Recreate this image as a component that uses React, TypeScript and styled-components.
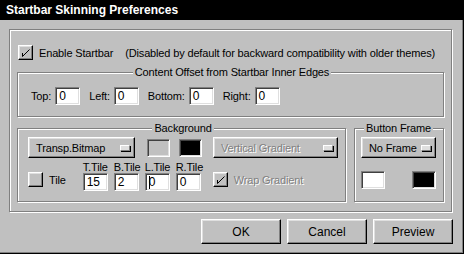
import React from 'react';
import styled, { createGlobalStyle, css } from 'styled-components';

const GlobalStyle = createGlobalStyle`
  html, body {
    margin: 0;
    padding: 0;
    background: #c0c0c0;
  }

  body {
    font-family: 'Liberation Sans', Arial, sans-serif;
    font-size: 11px;
    letter-spacing: -0.15px;
    color: #000;
  }
`;

const raised = css`
  border: 1px solid;
  border-color: #fff #000 #000 #fff;
  box-shadow: inset -1px -1px 0 #808080, inset 1px 1px 0 #dfdfdf;
`;

const sunken = css`
  border: 1px solid;
  border-color: #808080 #fff #fff #808080;
  box-shadow: inset 1px 1px 0 #404040, inset -1px -1px 0 #dfdfdf;
`;

const etched = css`
  border: 1px solid #808080;
  box-shadow: inset 1px 1px 0 #fff, 1px 1px 0 #fff;
`;

const Window = styled.div`
  box-sizing: border-box;
  width: 464px;
  height: 254px;
  display: flex;
  flex-direction: column;
  background: #c0c0c0;
  border-right: 1px solid #000;
  border-bottom: 1px solid #000;
  box-shadow: inset -1px -1px 0 #808080;
`;

const TitleBar = styled.div`
  height: 20px;
  background: #000;
  color: #fff;
  font-size: 12px;
  font-weight: bold;
  letter-spacing: 0;
  line-height: 20px;
  padding-left: 6px;
`;

const Frame = styled.div`
  ${etched};
  box-sizing: border-box;
  width: 443px;
  margin: 9px 0 0 9px;
  padding: 15px 7px 9px;
  display: flex;
  flex-direction: column;
`;

const Row = styled.div<{ $gap?: number; $top?: number; $align?: string }>`
  display: flex;
  align-items: ${(p) => p.$align || 'center'};
  gap: ${(p) => p.$gap || 0}px;
  margin-top: ${(p) => p.$top || 0}px;
`;

const Note = styled.span`
  margin-left: 12px;
`;

const Group = styled.div<{ $width?: number; $top?: number; $pad: string }>`
  ${etched};
  box-sizing: border-box;
  display: flex;
  flex-direction: column;
  ${(p) => (p.$width ? `width: ${p.$width}px;` : '')}
  margin-top: ${(p) => p.$top || 0}px;
  padding: ${(p) => p.$pad};
`;

const Legend = styled.div`
  align-self: center;
  margin-top: -7px;
  padding: 0 2px;
  line-height: 13px;
  background: #c0c0c0;
`;

const Groups = styled.div`
  display: flex;
  gap: 8px;
  margin-top: 11px;
`;

const Label = styled.span`
  line-height: 13px;
`;

const Pair = styled.div`
  display: flex;
  align-items: center;
  gap: 4px;
`;

const Field = styled.div<{ $caret?: boolean; $height?: number }>`
  ${sunken};
  position: relative;
  box-sizing: border-box;
  width: 25px;
  height: ${(p) => p.$height || 18}px;
  background: #fff;
  padding-left: 3px;
  line-height: ${(p) => (p.$height || 18) - 2}px;
  font-size: 12px;

  ${(p) =>
    p.$caret &&
    css`
      &::before {
        content: '';
        position: absolute;
        left: 3px;
        top: 2px;
        width: 1px;
        height: 13px;
        background: #000;
      }
    `}
`;

const Box = styled.span`
  ${raised};
  box-sizing: border-box;
  display: inline-flex;
  width: 15px;
  height: 15px;
  background: #c0c0c0;
`;

const CheckLabel = styled.label<{ $gap: number; $disabled?: boolean }>`
  display: flex;
  align-items: center;
  gap: ${(p) => p.$gap}px;
  color: ${(p) => (p.$disabled ? '#808080' : '#000')};
  text-shadow: ${(p) => (p.$disabled ? '1px 1px 0 #fff' : 'none')};
`;

const Button = styled.div<{ $width: number; $height: number; $disabled?: boolean }>`
  ${raised};
  box-sizing: border-box;
  display: flex;
  align-items: center;
  justify-content: space-between;
  width: ${(p) => p.$width}px;
  height: ${(p) => p.$height}px;
  padding: 0 4px 0 7px;
  background: #c0c0c0;
  color: ${(p) => (p.$disabled ? '#808080' : '#000')};
  text-shadow: ${(p) => (p.$disabled ? '1px 1px 0 #fff' : 'none')};
`;

const Indicator = styled.span`
  box-sizing: border-box;
  width: 10px;
  height: 6px;
  background: #dfdfdf;
  border: 1px solid;
  border-color: #fff #808080 #808080 #fff;
  box-shadow: 1px 1px 0 #000;
`;

const Swatch = styled.div<{ $color: string; $width?: number }>`
  ${sunken};
  box-sizing: border-box;
  width: ${(p) => p.$width || 23}px;
  height: 18px;
  background: ${(p) => p.$color};
`;

const TileColumn = styled.div`
  display: flex;
  flex-direction: column;
  width: 26px;
  line-height: 12px;
`;

const Footer = styled.div`
  display: flex;
  justify-content: flex-end;
  gap: 6px;
  margin: 7px 10px 0 0;
`;

const DialogButton = styled.button`
  ${raised};
  box-sizing: border-box;
  width: 80px;
  height: 25px;
  padding: 0;
  background: #c0c0c0;
  font-family: 'Liberation Sans', Arial, sans-serif;
  font-size: 12px;
  color: #000;
`;

const CheckMark = () => (
  <svg width="13" height="13" viewBox="0 0 13 13">
    <path d="M3.5 7 V10.5 L10.5 3.5" fill="none" stroke="#000" strokeWidth="1" />
  </svg>
);

const Check: React.FC<{ checked?: boolean }> = ({ checked }) => (
  <Box>{checked && <CheckMark />}</Box>
);

const DropButton: React.FC<{ text: string; width: number; disabled?: boolean }> = ({
  text,
  width,
  disabled,
}) => (
  <Button $width={width} $height={21} $disabled={disabled}>
    <span>{text}</span>
    <Indicator />
  </Button>
);

const offsets = [
  ['Top:', '0'],
  ['Left:', '0'],
  ['Bottom:', '0'],
  ['Right:', '0'],
];

const tiles = [
  ['T.Tile', '15', false],
  ['B.Tile', '2', false],
  ['L.Tile', '0', true],
  ['R.Tile', '0', false],
] as const;

export default function App() {
  return (
    <Window>
      <GlobalStyle />
      <TitleBar>Startbar Skinning Preferences</TitleBar>
      <Frame>
        <Row style={{ paddingLeft: 1 }}>
          <CheckLabel $gap={6}>
            <Check checked />
            Enable Startbar
          </CheckLabel>
          <Note>(Disabled by default for backward compatibility with older themes)</Note>
        </Row>

        <Group $top={12} $pad="0 10px 11px 13px">
          <Legend>Content Offset from Startbar Inner Edges</Legend>
          <Row $gap={9} $top={8}>
            {offsets.map(([label, value]) => (
              <Pair key={label}>
                <Label>{label}</Label>
                <Field>{value}</Field>
              </Pair>
            ))}
          </Row>
        </Group>

        <Groups>
          <Group $width={329} $pad="0 7px 10px 10px">
            <Legend>Background</Legend>
            <Row $top={2}>
              <DropButton text="Transp.Bitmap" width={107} />
              <Swatch $color="#c0c0c0" style={{ marginLeft: 12 }} />
              <Swatch $color="#000" style={{ marginLeft: 9 }} />
              <div style={{ marginLeft: 11 }}>
                <DropButton text="Vertical Gradient" width={125} disabled />
              </div>
            </Row>
            <Row $top={3} $align="flex-end">
              <CheckLabel $gap={6} style={{ marginBottom: 4 }}>
                <Check />
                Tile
              </CheckLabel>
              <Row $gap={5} style={{ marginLeft: 17 }}>
                {tiles.map(([label, value, caret]) => (
                  <TileColumn key={label}>
                    <span>{label}</span>
                    <Field $caret={caret}>{value}</Field>
                  </TileColumn>
                ))}
              </Row>
              <CheckLabel $gap={6} $disabled style={{ marginLeft: 11, marginBottom: 4 }}>
                <Check checked />
                Wrap Gradient
              </CheckLabel>
            </Row>
          </Group>

          <Group $width={90} $pad="0 7px 10px 6px">
            <Legend>Button Frame</Legend>
            <Row $top={2}>
              <DropButton text="No Frame" width={75} />
            </Row>
            <Row $top={13} style={{ justifyContent: 'space-between' }}>
              <Swatch $color="#fff" $width={24} />
              <Swatch $color="#000" $width={24} />
            </Row>
          </Group>
        </Groups>
      </Frame>
      <Footer>
        <DialogButton>OK</DialogButton>
        <DialogButton>Cancel</DialogButton>
        <DialogButton>Preview</DialogButton>
      </Footer>
    </Window>
  );
}
